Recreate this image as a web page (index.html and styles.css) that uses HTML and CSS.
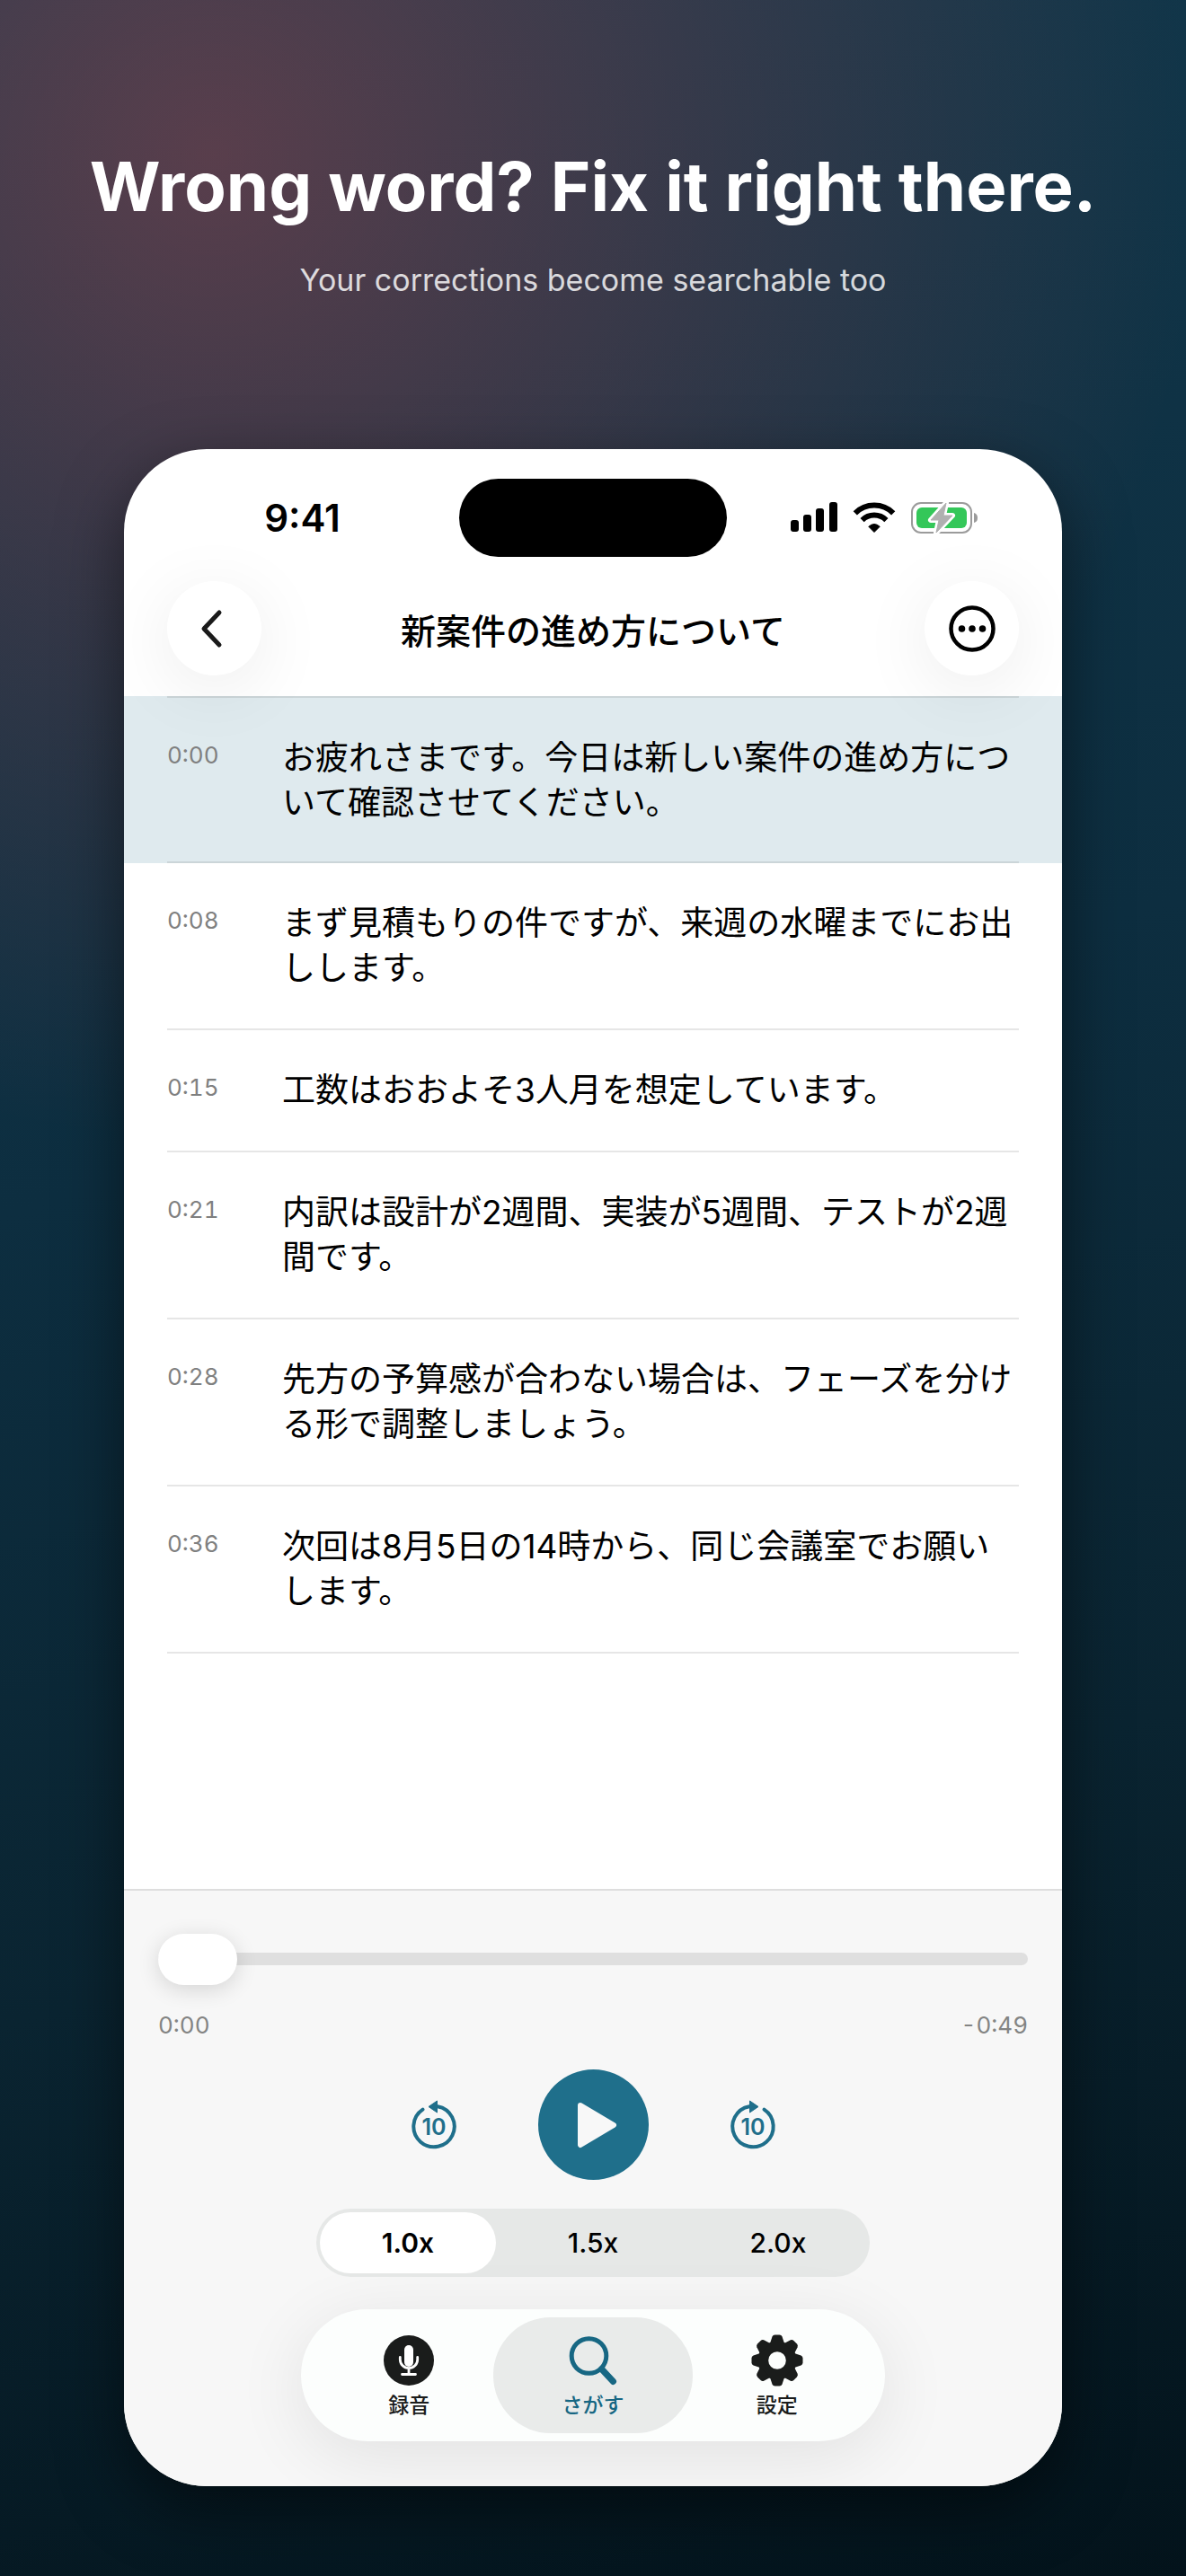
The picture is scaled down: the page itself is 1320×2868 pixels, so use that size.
FILE: index.html
```html
<!DOCTYPE html>
<html lang="ja">

<head>
    <meta charset="UTF-8">
    <meta name="viewport" content="width=device-width, initial-scale=1.0">
    <title>新案件の進め方について</title>
    <link rel="stylesheet" href="styles.css">
</head>

<body>
    <header class="hero" lang="en">
        <h1 class="hero-title">Wrong word? Fix it right there.</h1>
        <p class="hero-sub">Your corrections become searchable too</p>
    </header>

    <main class="phone">
        <div class="top">
            <div class="status">
                <div class="clock">9:41</div>
                <div class="island"></div>
                <div class="status-icons">
                    <svg width="52" height="34" viewBox="0 0 52 34">
                        <rect x="0" y="20" width="9" height="13" rx="3" />
                        <rect x="14" y="14" width="9" height="19" rx="3" />
                        <rect x="28" y="7" width="9" height="26" rx="3" />
                        <rect x="43" y="0" width="9" height="33" rx="3" />
                    </svg>
                    <svg width="46" height="34" viewBox="0 0 46 34">
                        <g fill="none" stroke="#000" stroke-width="6">
                            <path d="M1.8 12.3a30 30 0 0 1 42.4 0" />
                            <path d="M9.6 20.1a19 19 0 0 1 26.8 0" />
                        </g>
                        <path d="M23 33.5l-6.2-6.2q6.2-5.6 12.4 0z" stroke="#000" stroke-linejoin="round" />
                    </svg>
                    <svg width="74" height="36" viewBox="0 0 74 36">
                        <rect x="1" y="1" width="66" height="33" rx="10" fill="none" stroke="#9b9b9b" stroke-width="2" />
                        <rect x="6" y="6" width="56" height="23" rx="6" fill="#34c759" />
                        <path d="M70 12q4 1 4 5.500t-4 5.500z" fill="#9b9b9b" />
                        <path class="bolt-edge" d="M39 1L22 20h9l-3 14 18-19H36z" />
                        <path class="bolt" d="M39 1L22 20h9l-3 14 18-19H36z" />
                    </svg>
                </div>
            </div>

            <div class="nav">
                <button class="round" type="button" aria-label="戻る">
                    <svg width="32" height="42" viewBox="0 0 32 42">
                        <path d="M21 3L4 21l17 18" fill="none" stroke="#1a1a1a" stroke-width="5" stroke-linecap="round" stroke-linejoin="round" />
                    </svg>
                </button>
                <h2 class="nav-title">新案件の進め方について</h2>
                <button class="round" type="button" aria-label="メニュー">
                    <svg width="52" height="52" viewBox="0 0 52 52">
                        <circle cx="26" cy="26" r="23.500" fill="none" stroke="#000" stroke-width="4.500" />
                        <circle cx="14.500" cy="26" r="3.800" />
                        <circle cx="26" cy="26" r="3.800" />
                        <circle cx="37.500" cy="26" r="3.800" />
                    </svg>
                </button>
            </div>
        </div>

        <ol class="lines">
            <li class="line now">
                <div class="line-in">
                    <time>0:00</time>
                    <p>お疲れさまです。今日は新しい案件の進め方について確認させてください。</p>
                </div>
            </li>
            <li class="line">
                <div class="line-in">
                    <time>0:08</time>
                    <p>まず見積もりの件ですが、来週の水曜までにお出しします。</p>
                </div>
            </li>
            <li class="line">
                <div class="line-in">
                    <time>0:15</time>
                    <p>工数はおおよそ3人月を想定しています。</p>
                </div>
            </li>
            <li class="line">
                <div class="line-in">
                    <time>0:21</time>
                    <p>内訳は設計が2週間、実装が5週間、テストが2週間です。</p>
                </div>
            </li>
            <li class="line">
                <div class="line-in">
                    <time>0:28</time>
                    <p>先方の予算感が合わない場合は、フェーズを分ける形で調整しましょう。</p>
                </div>
            </li>
            <li class="line">
                <div class="line-in">
                    <time>0:36</time>
                    <p>次回は8月5日の14時から、同じ会議室でお願いします。</p>
                </div>
            </li>
        </ol>

        <section class="player">
            <input class="seek" type="range" min="0" max="49" value="0" aria-label="再生位置">
            <div class="times">
                <span>0:00</span>
                <span>-0:49</span>
            </div>

            <div class="controls">
                <button class="skip" type="button" aria-label="10秒戻る">
                    <svg width="50" height="56" viewBox="0 0 50 56">
                        <path class="ring" d="M29 7.200A22.700 22.700 0 1 1 12.500 10.600" />
                        <path class="head" d="M19 7.500L28.500 1v13z" />
                        <text x="25" y="39">10</text>
                    </svg>
                </button>
                <button class="play" type="button" aria-label="再生">
                    <svg width="123" height="123" viewBox="0 0 123 123">
                        <path d="M47 40L84 62 47 84z" fill="#f8f8f8" stroke="#f8f8f8" stroke-width="6" stroke-linejoin="round" />
                    </svg>
                </button>
                <button class="skip" type="button" aria-label="10秒進む">
                    <svg width="50" height="56" viewBox="0 0 50 56">
                        <path class="ring" d="M21 7.200A22.700 22.700 0 1 0 37.500 10.600" />
                        <path class="head" d="M31 7.500L21.500 1v13z" />
                        <text x="25" y="39">10</text>
                    </svg>
                </button>
            </div>

            <div class="speeds" role="radiogroup" aria-label="再生速度">
                <label class="speed"><input type="radio" name="speed" value="1.0" checked><span>1.0x</span></label>
                <label class="speed"><input type="radio" name="speed" value="1.5"><span>1.5x</span></label>
                <label class="speed"><input type="radio" name="speed" value="2.0"><span>2.0x</span></label>
            </div>

            <nav class="tabs">
                <a class="tab" href="#record">
                    <svg width="56" height="56" viewBox="0 0 56 56">
                        <circle cx="28" cy="28" r="28" fill="#1a1c1b" />
                        <rect x="23" y="11" width="10" height="24" rx="5" fill="#fff" />
                        <path d="M18.300 24.500v2.500a9.700 9.700 0 0 0 19.400 0v-2.500M28 37v6M20.500 43.500h15" fill="none" stroke="#fff" stroke-width="2.800" stroke-linecap="round" />
                    </svg>
                    <span>録音</span>
                </a>
                <a class="tab active" href="#search" aria-current="page">
                    <svg width="56" height="56" viewBox="0 0 56 56">
                        <circle cx="23.500" cy="23" r="19.300" fill="none" stroke="#176783" stroke-width="5" />
                        <path d="M37.500 37.500L50.500 51.500" stroke="#176783" stroke-width="7" stroke-linecap="round" />
                    </svg>
                    <span>さがす</span>
                </a>
                <a class="tab" href="#settings">
                    <svg width="58" height="56" viewBox="-29 -28 58 56">
                        <g fill="#1a1c1b">
                            <circle r="21.500" />
                            <path id="tooth" d="M-8-19l2.500-7.500q.8-2 3-2h5q2.200 0 3 2L8-19z" />
                            <use href="#tooth" transform="rotate(45)" />
                            <use href="#tooth" transform="rotate(90)" />
                            <use href="#tooth" transform="rotate(135)" />
                            <use href="#tooth" transform="rotate(180)" />
                            <use href="#tooth" transform="rotate(225)" />
                            <use href="#tooth" transform="rotate(270)" />
                            <use href="#tooth" transform="rotate(315)" />
                        </g>
                        <circle r="9.800" fill="#fcfefd" />
                    </svg>
                    <span>設定</span>
                </a>
            </nav>
        </section>
    </main>
</body>

</html>
```
FILE: styles.css
```css
* {
    box-sizing: border-box;
    margin: 0;
    padding: 0;
}

body {
    min-height: 100vh;
    display: flex;
    flex-direction: column;
    padding-bottom: 100px;
    font-family: Inter, "Noto Sans CJK JP", sans-serif;
    color: #000;
    background:
        radial-gradient(circle 1100px at 18% 6%, rgba(255, 80, 80, 0.3), rgba(255, 80, 80, 0)),
        linear-gradient(165deg, #12384c 0%, #0d2e40 42%, #0a2431 70%, #03131b 100%);
}

button {
    border: none;
    background: none;
    font: inherit;
    cursor: pointer;
}

svg {
    display: block;
    overflow: visible;
}

/* hero */
.hero {
    padding: 157px 40px 163px;
    text-align: center;
}

.hero-title {
    font-size: 76px;
    line-height: 100px;
    font-weight: 700;
    color: #fff;
    white-space: nowrap;
}

.hero-sub {
    margin-top: 30px;
    font-size: 34px;
    line-height: 50px;
    color: rgba(255, 255, 255, 0.82);
}

/* phone */
.phone {
    flex: 1;
    display: flex;
    flex-direction: column;
    margin: 0 138px;
    border-radius: 92px;
    overflow: hidden;
    background: #fff;
    box-shadow: 0 24px 70px rgba(0, 0, 0, 0.5);
}

.top {
    position: relative;
    z-index: 1;
}

.status {
    display: grid;
    grid-template-columns: 1fr 298px 1fr;
    align-items: center;
    padding: 33px 24px 0;
}

.clock {
    text-align: center;
    font-size: 42px;
    font-weight: 600;
}

.island {
    height: 87px;
    border-radius: 44px;
    background: #000;
}

.status-icons {
    display: flex;
    justify-content: center;
    gap: 18px;
}

.bolt {
    fill: #b0b0b0;
    stroke: #b0b0b0;
    stroke-linejoin: round;
}

.bolt-edge {
    fill: #fff;
    stroke: #fff;
    stroke-width: 6;
    stroke-linejoin: round;
}

.nav {
    display: flex;
    align-items: center;
    justify-content: space-between;
    padding: 27px 48px 23px;
}

.round {
    width: 105px;
    height: 105px;
    display: flex;
    align-items: center;
    justify-content: center;
    border-radius: 50%;
    background: #fff;
    box-shadow: 0 14px 80px rgba(0, 0, 0, 0.08);
}

.nav-title {
    font-size: 39px;
    font-weight: 500;
}

/* transcript */
.lines {
    flex: 1;
    list-style: none;
}

.line {
    padding: 0 48px;
}

.line-in {
    display: flex;
    padding: 42px 0;
    border-bottom: 2px solid #e6e6e6;
}

.now {
    background: #dfeaee;
}

.now .line-in {
    padding-bottom: 40px;
    border-top: 2px solid #cbd5d8;
    border-bottom-color: #cbd5d8;
}

.line time {
    flex: 0 0 128px;
    font-size: 26px;
    line-height: 44px;
    font-variant-numeric: tabular-nums;
    color: #7f8080;
}

.line p {
    flex: 1;
    font-size: 37px;
    line-height: 50px;
}

/* player */
.player {
    padding: 47px 38px 50px;
    border-top: 2px solid #dedede;
    background: #f7f7f7;
}

.seek {
    display: block;
    width: 100%;
    height: 57px;
    appearance: none;
    background: none;
}

.seek::-webkit-slider-runnable-track {
    height: 14px;
    border-radius: 7px;
    background: #dfdfdf;
}

.seek::-webkit-slider-thumb {
    appearance: none;
    width: 88px;
    height: 57px;
    margin-top: -21px;
    border-radius: 29px;
    background: #fff;
    box-shadow: 0 5px 24px rgba(0, 0, 0, 0.14);
}

.times {
    display: flex;
    justify-content: space-between;
    margin-top: 28px;
    font-size: 26px;
    line-height: 36px;
    font-variant-numeric: tabular-nums;
    color: #838483;
}

.controls {
    display: flex;
    align-items: center;
    justify-content: center;
    gap: 91px;
    margin-top: 31px;
}

.play {
    width: 123px;
    height: 123px;
    border-radius: 50%;
    background: #1f6f8b;
}

.ring {
    fill: none;
    stroke: #1f6f8b;
    stroke-width: 4;
    stroke-linecap: round;
}

.head {
    fill: #1f6f8b;
    stroke: #1f6f8b;
    stroke-linejoin: round;
}

.skip text {
    fill: #1f6f8b;
    font-size: 25px;
    font-weight: 600;
    text-anchor: middle;
}

.speeds {
    display: grid;
    grid-template-columns: repeat(3, 1fr);
    gap: 10px;
    max-width: 616px;
    height: 76px;
    margin: 32px auto 0;
    padding: 4px;
    border-radius: 38px;
    background: #e6e8e7;
}

.speed {
    display: flex;
    align-items: center;
    justify-content: center;
    border-radius: 34px;
    font-size: 30px;
    font-weight: 500;
    cursor: pointer;
}

.speed input {
    appearance: none;
}

.speed:has(input:checked) {
    background: #fff;
    font-weight: 600;
}

.tabs {
    display: grid;
    grid-template-columns: repeat(3, 1fr);
    max-width: 650px;
    margin: 36px auto 0;
    padding: 9px 18px;
    border-radius: 74px;
    background: #fcfefd;
    box-shadow: 0 16px 80px rgba(0, 0, 0, 0.09);
}

.tab {
    display: flex;
    flex-direction: column;
    align-items: center;
    gap: 8px;
    padding: 20px 0 17px;
    font-size: 23px;
    line-height: 28px;
    font-weight: 500;
    color: #1a1c1b;
    text-decoration: none;
}

.active {
    margin: 0 -9px;
    border-radius: 64px;
    background: #e9ebea;
    color: #176783;
}
```
